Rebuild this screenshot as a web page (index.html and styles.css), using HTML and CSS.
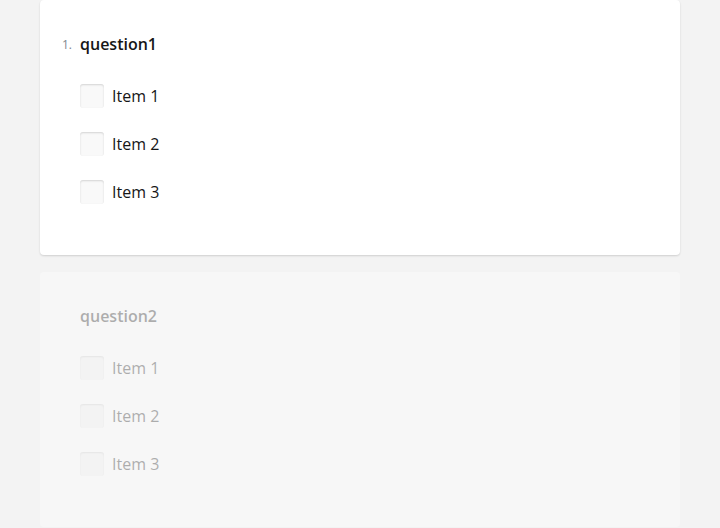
FILE: index.html
```html
<!DOCTYPE html>
<html>
<head>
<meta charset="utf-8">
<link rel="stylesheet" href="styles.css">
</head>
<body>
<div class="page">
  <div class="card">
    <div class="title"><span class="num">1.</span><span class="qtext">question1</span></div>
    <div class="items">
      <label class="item"><span class="box"></span><span class="label">Item 1</span></label>
      <label class="item"><span class="box"></span><span class="label">Item 2</span></label>
      <label class="item"><span class="box"></span><span class="label">Item 3</span></label>
    </div>
  </div>
  <div class="card disabled">
    <div class="title"><span class="qtext">question2</span></div>
    <div class="items">
      <label class="item"><span class="box"></span><span class="label">Item 1</span></label>
      <label class="item"><span class="box"></span><span class="label">Item 2</span></label>
      <label class="item"><span class="box"></span><span class="label">Item 3</span></label>
    </div>
  </div>
</div>
</body>
</html>
```
FILE: styles.css
```css
html, body {
  margin: 0;
  padding: 0;
  background: #f3f3f3;
  font-family: "Open Sans", "Liberation Sans", sans-serif;
  color: #161616;
}
.page {
  width: 640px;
  margin: 0 auto;
  display: flex;
  flex-direction: column;
  gap: 17px;
}
.card {
  background: #ffffff;
  border-radius: 4px;
  box-shadow: 0 1px 2px rgba(0, 0, 0, 0.15);
  padding: 32px 40px 39px;
  height: 255px;
  box-sizing: border-box;
}
.title {
  position: relative;
  font-size: 16px;
  line-height: 24px;
  font-weight: 600;
  height: 24px;
}
.num {
  position: absolute;
  left: -18px;
  top: 1px;
  font-size: 12px;
  font-weight: 400;
  color: #808890;
}
.items {
  margin-top: 16px;
  display: flex;
  flex-direction: column;
}
.item {
  display: flex;
  align-items: center;
  height: 48px;
  gap: 8px;
  font-size: 16px;
  line-height: 24px;
}
.box {
  width: 24px;
  height: 24px;
  border-radius: 3px;
  background: #f9f9f9;
  box-shadow: inset 0 1px 2px rgba(0, 0, 0, 0.15);
}
.disabled {
  background: #f7f7f7;
  box-shadow: none;
}
.disabled .title,
.disabled .label {
  opacity: 0.33;
}
.disabled .box {
  background: #f3f3f3;
  box-shadow: inset 0 1px 2px rgba(0, 0, 0, 0.06);
}
```
